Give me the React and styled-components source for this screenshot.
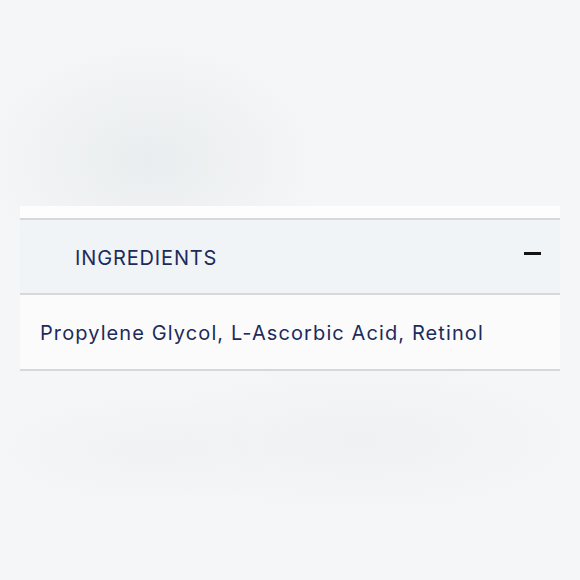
import React from 'react';
import styled, { createGlobalStyle } from 'styled-components';

const GlobalStyle = createGlobalStyle`
  html, body {
    margin: 0;
    padding: 0;
  }
  body {
    background: #f4f6f7;
    font-family: "Inter", "Liberation Sans", sans-serif;
  }
`;

const Page = styled.div`
  width: 580px;
  height: 580px;
  box-sizing: border-box;
  padding: 206px 20px 0;
  display: flex;
  flex-direction: column;
  background:
    radial-gradient(ellipse 170px 120px at 150px 160px, #eaedef 0%, rgba(234,237,239,0) 100%),
    radial-gradient(ellipse 240px 80px at 360px 440px, #eff1f3 0%, rgba(239,241,243,0) 100%),
    radial-gradient(ellipse 160px 60px at 140px 450px, #f0f2f4 0%, rgba(240,242,244,0) 100%),
    #f4f6f7;
`;

const PrevItem = styled.div`
  height: 12px;
  background: #fdfdfd;
`;

const Item = styled.div`
  display: flex;
  flex-direction: column;
  border-top: 2px solid #d6d8da;
  border-bottom: 2px solid #d6d8da;
`;

const Header = styled.button`
  height: 75px;
  display: flex;
  align-items: center;
  justify-content: space-between;
  padding: 2px 19px 0 55px;
  border: 0;
  border-bottom: 2px solid #d6d8da;
  background: #f1f4f6;
  cursor: pointer;
  font: inherit;
`;

const Title = styled.span`
  font-size: 20px;
  letter-spacing: 0.85px;
  color: #1d2b5b;
  text-transform: uppercase;
`;

const Minus = styled.span`
  width: 17px;
  height: 3px;
  margin-top: -8px;
  background: #141414;
`;

const Body = styled.div`
  height: 74px;
  display: flex;
  align-items: center;
  padding: 2px 20px 0;
  box-sizing: border-box;
  background: #fbfbfc;
  font-size: 20px;
  letter-spacing: 1.1px;
  color: #1d2b5b;
`;

export default function App() {
  return (
    <>
      <GlobalStyle />
      <Page>
        <PrevItem />
        <Item>
          <Header>
            <Title>Ingredients</Title>
            <Minus />
          </Header>
          <Body>Propylene Glycol, L-Ascorbic Acid, Retinol</Body>
        </Item>
      </Page>
    </>
  );
}
